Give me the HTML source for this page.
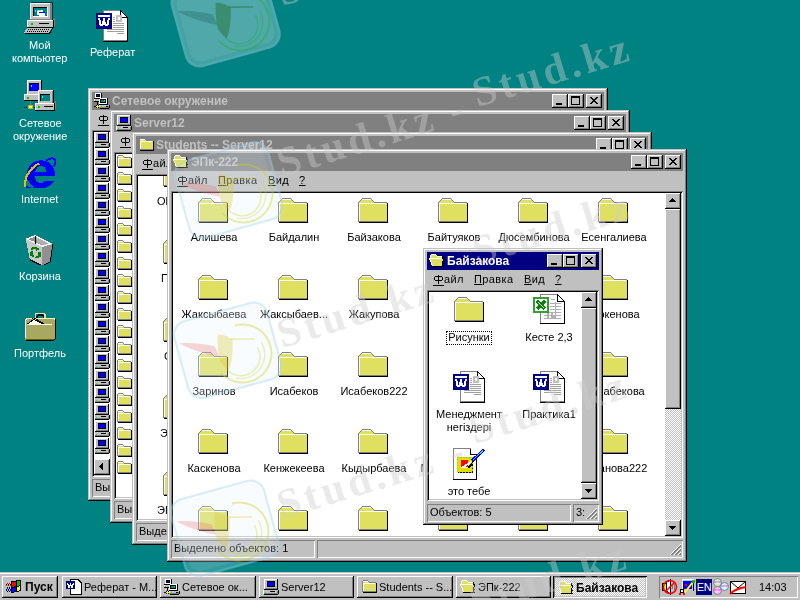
<!DOCTYPE html><html><head><meta charset="utf-8"><style>
*{margin:0;padding:0;box-sizing:border-box}
html,body{width:800px;height:600px;overflow:hidden;background:#008282;font-family:"Liberation Sans",sans-serif;font-size:11px;color:#000;position:relative}
.a{position:absolute}
.win{position:absolute;background:#c0c0c0;box-shadow:inset -1px -1px #000,inset 1px 1px #c0c0c0,inset -2px -2px #808080,inset 2px 2px #fff;overflow:hidden}
.tb{position:absolute;left:4px;right:4px;top:4px;height:18px;background:#808080;overflow:hidden}
.tb.act{background:#000080}
.tt{position:absolute;left:20px;top:2px;font-weight:bold;font-size:12px;line-height:14px;color:#c0c0c0;white-space:nowrap}
.act .tt{color:#fff}
.bt{position:absolute;top:2px;width:16px;height:14px;background:#c0c0c0;box-shadow:inset -1px -1px #000,inset 1px 1px #fff,inset -2px -2px #808080,inset 2px 2px #c0c0c0}
.mb{position:absolute;white-space:nowrap;line-height:13px;letter-spacing:0.4px}
.u{text-decoration:underline}
.cl{position:absolute;background:#fff;box-shadow:inset 1px 1px #808080,inset -1px -1px #fff,inset 2px 2px #000,inset -2px -2px #c0c0c0;overflow:hidden}
.clin{position:absolute;left:2px;top:2px;right:2px;bottom:2px;overflow:hidden}
.sb{position:absolute;height:18px;box-shadow:inset 1px 1px #808080,inset -1px -1px #fff;white-space:nowrap;overflow:hidden}
.sb span{position:absolute;left:3px;top:2px;line-height:13px}
.lbl{position:absolute;white-space:nowrap;text-align:center;line-height:13px}
.dt{color:#fff}
.btn{position:absolute;background:#c0c0c0;box-shadow:inset -1px -1px #000,inset 1px 1px #fff,inset -2px -2px #808080,inset 2px 2px #c0c0c0}
.btn.dn{box-shadow:inset 1px 1px #000,inset -1px -1px #fff,inset 2px 2px #808080,inset -2px -2px #c0c0c0;background:repeating-conic-gradient(#fff 0 25%,#c0c0c0 0 50%) 0 0/2px 2px}
.trk{position:absolute;background-color:#e0e0e0}
svg{position:absolute;overflow:visible}
.mb,.lbl,.tt,.sb span,.tx{will-change:transform}
</style></head><body>
<svg width="0" height="0" style="position:absolute">
<defs>
<symbol id="word16" viewBox="0 0 16 16">
 <path d="M4.5 0.5 H12 L15.5 4 V15.5 H4.5 Z" fill="#fff" stroke="#000"/>
 <rect x="0" y="2" width="9" height="8" fill="#000080"/>
 <path d="M1.5 4 L3 8.5 L4.5 5.5 L6 8.5 L7.5 4" fill="none" stroke="#fff"/>
</symbol>
<pattern id="dithw" width="2" height="2" patternUnits="userSpaceOnUse"><rect width="2" height="2" fill="#c0c0c0"/><rect width="1" height="1" fill="#fff"/><rect x="1" y="1" width="1" height="1" fill="#fff"/></pattern>

<symbol id="comp32" viewBox="0 0 32 32">
 <path d="M6 1 H27 V18 H6 Z" fill="#c0c0c0"/>
 <path d="M26 0 H28 V18 H26 Z" fill="#808080"/>
 <path d="M6.5 18 V1.5 H26" fill="none" stroke="#fff"/>
 <path d="M7 0.5 H28.5 V18" fill="none" stroke="#000" stroke-opacity="0.6"/>
 <path d="M26.5 1 V17.5 H6" fill="none" stroke="#808080"/>
 <rect x="9" y="5" width="15" height="10" fill="#008080"/>
 <path d="M9.5 15 V5.5 H24" fill="none" stroke="#000"/>
 <path d="M23.5 5 V14.5 H9" fill="none" stroke="#fff"/>
 <rect x="13" y="8" width="6" height="5" fill="#fff"/><rect x="15" y="10" width="6" height="4" fill="#fff" stroke="#000" stroke-width="0"/>
 <path d="M15 10.5 H21" stroke="#0000ff"/><path d="M13 8.5 H17" stroke="#c0c0c0"/>
 <rect x="11" y="8" width="1" height="2" fill="#00ffff"/>
 <path d="M3 18 H29 V25 H3 Z" fill="#c0c0c0"/>
 <path d="M29 17 L31 15 V23 L29 25 Z" fill="#808080"/>
 <path d="M3.5 25 V18.5 H29" fill="none" stroke="#fff"/>
 <path d="M3 25.5 H29.5 V18" fill="none" stroke="#000"/>
 <rect x="7" y="21" width="2" height="2" fill="#00c000"/>
 <rect x="15" y="21" width="10" height="1" fill="#000"/>
 <path d="M3 26 H28 L25 31 H0 Z" fill="#c0c0c0"/>
 <path d="M0.5 31.5 H25.5 L28.5 26.5" fill="none" stroke="#000"/>
 <path d="M4 27.5 H26 M3 29.5 H25" stroke="#000" stroke-dasharray="1 1"/>
</symbol>
<symbol id="word32" viewBox="0 0 32 32">
 <path d="M7.5 0.5 H24.5 L31.5 7.5 V30.5 H7.5 Z" fill="#fff" stroke="#808080"/>
 <path d="M31.5 7 V31.5 H7" fill="none" stroke="#000"/>
 <path d="M24.5 0.5 V7.5 H31.5" fill="#fff" stroke="#000"/>
 <path d="M24.5 0.5 L31.5 7.5" stroke="#000"/>
 <rect x="20" y="5" width="6" height="7" fill="#c0c0c0"/><path d="M22 7h2v3h-2z" fill="#fff"/>
 <path d="M17 7.5h2M17 9.5h2M17 11.5h2M17 13.5H28M17 15.5H28M17 17.5H28M11 19.5H28M11 21.5H28M21 23.5H28" stroke="#a0a0a0"/>
 <rect x="0" y="3" width="16" height="16" fill="#0000a0"/><rect x="0.5" y="3.5" width="15" height="15" fill="none" stroke="#000060"/>
 <path d="M2 5.5h12" stroke="#fff" stroke-width="2"/>
 <path d="M3 8 L4.5 15 H6.5 L8 10 L9.5 15 H11.5 L13 8" fill="none" stroke="#fff" stroke-width="2"/>
</symbol>
<symbol id="net32" viewBox="0 0 32 32">
 <path d="M3 1 H18 V15 H3 Z" fill="#c0c0c0"/>
 <path d="M3.5 15 V1.5 H18" fill="none" stroke="#fff"/>
 <path d="M17.5 1 V15" fill="none" stroke="#000"/>
 <rect x="5" y="4" width="10" height="8" fill="#0000ff"/><path d="M5.5 12 V4.5 H15" fill="none" stroke="#000"/>
 <rect x="7" y="6" width="1" height="2" fill="#00ffff"/>
 <path d="M0 15 H15 V21 H0 Z" fill="#c0c0c0"/>
 <path d="M0.5 21 V15.5 H15" fill="none" stroke="#fff"/>
 <path d="M0 21.5 H14.5 V15" fill="none" stroke="#000"/>
 <rect x="3" y="18" width="2" height="2" fill="#00c000"/>
 <path d="M6.5 22 V27" stroke="#808080" stroke-width="1"/>
 <path d="M0 28.5 H13" stroke="#000" stroke-dasharray="1 1"/>
 <rect x="4" y="26" width="5" height="4" fill="#c0c000"/><rect x="5" y="27" width="3" height="2" fill="#ffff80"/>
 <path d="M14 11 H29 V24 H14 Z" fill="#c0c0c0"/>
 <path d="M14.5 24 V11.5 H29" fill="none" stroke="#fff"/>
 <path d="M29.5 11 V24" fill="none" stroke="#000"/>
 <path d="M28 12 V24" fill="none" stroke="#808080"/>
 <rect x="16" y="15" width="10" height="7" fill="#008080"/><path d="M16.5 22 V15.5 H26" fill="none" stroke="#000"/>
 <rect x="18" y="17" width="1" height="2" fill="#00ffff"/>
 <path d="M11 24 H30 V31 H11 Z" fill="#c0c0c0"/>
 <path d="M30 23 L32 21 V29 L30 31 Z" fill="#808080"/>
 <path d="M11.5 31 V24.5 H30" fill="none" stroke="#fff"/>
 <path d="M11 31.5 H30.5 V24" fill="none" stroke="#000"/>
 <rect x="14" y="27" width="2" height="2" fill="#00c000"/>
 <rect x="20" y="27" width="9" height="1" fill="#000"/>
</symbol>
<symbol id="ie32" viewBox="0 0 32 32">
 <path d="M17 4 C9 4 2.5 10.5 2.5 18.5 C2.5 26.5 9 32.5 17 32.5 C23 32.5 28 29 30.5 24.5 H21.5 C20.5 26 19 27 17 27 C13.5 27 11 24 11 20 H31 C31.2 19.3 31.2 18.8 31.2 18.5 C31.2 10.5 25 4 17 4 Z" fill="#0000ff"/>
 <path d="M11.5 15.5 C12 12 14 10 17 10 C20 10 22 12 22.5 15.5 Z" fill="#008080"/>
 <path d="M22 5 C26 1.5 30.5 1.5 31.5 4.5 C32 6.5 31 8.5 29.5 10.5" fill="none" stroke="#0000ff" stroke-width="2"/>
 <path d="M1.5 31 C0.5 26 2 20 6 15 C9 11 12 8.5 15.5 7.5" fill="none" stroke="#e0c000" stroke-width="2.2"/>
 <path d="M2.5 30 C4 32.5 8 33 12 32" fill="none" stroke="#0000ff" stroke-width="2"/>
 <path d="M8 22 C9 25 11 27.5 14 28.5" fill="none" stroke="#000080" stroke-width="2" stroke-dasharray="1 1"/>
</symbol>
<symbol id="recycle32" viewBox="0 0 32 32">
 <path d="M1.6 5.8 L5.8 26.2 L18.4 32.5 L18.4 13.9 Z" fill="#c8c8c8"/>
 <path d="M18.4 13.9 L28.6 10.9 L26.2 28.6 L18.4 32.5 Z" fill="#909090"/>
 <path d="M1.6 5.8 L11.2 1.9 L28.6 10.9 L18.4 13.9 Z" fill="#fff"/>
 <path d="M4.5 6.2 L11.2 3.6 L25 10.8 L18.2 12.4 Z" fill="#909090"/>
 <path d="M11.2 3.6 L14 10 L18.2 12.4 L25 10.8 Z" fill="#b0b0b0"/>
 <path d="M11.5 3 V11" stroke="#000" stroke-width="1.2"/>
 <path d="M28.8 11 L26.4 28.8 L18.4 33" fill="none" stroke="#000" stroke-width="1"/>
 <path d="M5.8 26.6 L18.4 33" fill="none" stroke="#000" stroke-width="1"/>
 <path d="M7 16 L11 14.5 L14.5 16.5 M15.5 18.5 V23 L12.5 24.5 M10 23.5 L7.5 22 V18.5" fill="none" stroke="#008000" stroke-width="2.2"/>
 <path d="M13.5 14.5 L15.5 17 L12.5 17.5 Z M14 25.5 L11 24.5 L13 22.5 Z M6 20 L8 17 L9.5 19.5 Z" fill="#008000"/>
</symbol>
<symbol id="brief32" viewBox="0 0 32 32">
 <path d="M11.5 8 V5 Q11.5 3.5 13 3.5 H19.5 Q21 3.5 21 5 V8" fill="none" stroke="#e0e0a0" stroke-width="1.6"/>
 <path d="M13 8 V6 Q13 5 14 5 H18.5 Q19.5 5 19.5 6 V8" fill="none" stroke="#000" stroke-width="1.2"/>
 <path d="M0.5 9.5 L2.5 7.5 H30 L31.5 9 V28 L30 29.5 H1 L0.5 29 Z" fill="#a8a860"/>
 <path d="M1 10.5 L2.5 8.5 H30 L31 10" fill="none" stroke="#f0f0c0" stroke-width="1.5"/>
 <path d="M3 14.5 L11 8.5 L20 14.5 Z" fill="#fff"/>
 <path d="M3 14.5 L11 8.5 M8 8.5 L20 14.5 M11 8.5 L21 14.5" fill="none" stroke="#000" stroke-width="1"/>
 <path d="M3 14.5 H28" stroke="#fff" stroke-width="1"/>
 <path d="M1.5 28 V10" stroke="#fff"/>
 <path d="M31.5 9 V28.5 L30 30 H1.5" fill="none" stroke="#000" stroke-width="1.2"/>
 <path d="M2 29 H30" stroke="#606000"/>
</symbol>
<symbol id="excel32" viewBox="0 0 32 32">
 <path d="M7.5 0.5 H24.5 L31.5 7.5 V29.5 H7.5 Z" fill="#fff" stroke="#808080"/>
 <path d="M31.5 7 V29.5 H7" fill="none" stroke="#000"/>
 <path d="M24.5 0.5 V7.5 H31.5" fill="#fff" stroke="#000"/>
 <path d="M24.5 0.5 L31.5 7.5" stroke="#000"/>
 <path d="M18 5.5h4M17 9.5H28M17 12.5H28M17 15.5H28M11 18.5H28M11 21.5H28M11 24.5H28M22.5 8V25" stroke="#b0b0b0"/>
 <path d="M15 16V25M19 19V25M21 21V25" stroke="#b0b0b0" stroke-width="2"/>
 <rect x="1" y="4" width="14" height="14" fill="#fff" stroke="#30a030" stroke-width="2"/>
 <path d="M4 7 L12 15 M12 7 L4 15" stroke="#108010" stroke-width="3"/>
 <path d="M5 8 L11 14" stroke="#e0ffe0" stroke-width="0.8"/>
</symbol>
<symbol id="paint32" viewBox="0 0 32 32">
 <path d="M0.5 0.5 H17.5 L23.5 6.5 V31.5 H0.5 Z" fill="#fff" stroke="#808080"/>
 <path d="M23.5 6 V31.5 H0" fill="none" stroke="#000"/>
 <path d="M17.5 0.5 V6.5 H23.5" fill="#fff" stroke="#000"/>
 <rect x="5" y="10" width="15" height="15" fill="#000"/>
 <path d="M4 9 H19 V24 H4 Z" fill="#e0e000"/>
 <path d="M4 9 H19 V24 H4 Z" fill="none" stroke="#c0c000" stroke-dasharray="1.5 1.5"/>
 <rect x="8" y="12" width="7" height="8" fill="#ff0000"/>
 <rect x="8" y="19" width="7" height="1" fill="#fff"/>
 <path d="M19 13 L31 1.5" stroke="#0000ff" stroke-width="3"/>
 <path d="M20 12 L30 2.5" stroke="#60c0ff" stroke-width="1"/>
 <path d="M9.5 19.5 L18 14" stroke="#fff" stroke-width="2"/>
 <path d="M15 20 L19 16" stroke="#000" stroke-width="2"/>
</symbol>
<symbol id="winlogo" viewBox="0 0 16 16">
 <path d="M5 2.5 L10 1.5 L15 0.5 V12 L10 13 L5 14 Z" fill="#000"/>
 <path d="M6 3.3 L9.6 2.6 V7.2 L6 7.9 Z" fill="#ff0000"/>
 <path d="M10.6 2.4 L14 1.7 V6.3 L10.6 7 Z" fill="#00c000"/>
 <path d="M6 8.9 L9.6 8.2 V12.3 L6 13 Z" fill="#0000ff"/>
 <path d="M10.6 8 L14 7.3 V11.4 L10.6 12.1 Z" fill="#ffff00"/>
 <path d="M1 4.5h1M3 4.5h1M0 6.5h1M2 6.5h1M4 6.5h1" stroke="#ff0000"/>
 <path d="M1 9.5h1M3 9.5h1M0 11.5h1M2 11.5h1M4 11.5h1" stroke="#0000ff"/>
 <path d="M0 5.5h1M2 5.5h1M4 5.5h1M1 8.5h1M3 8.5h1M0 10.5h1M2 10.5h1M4 10.5h1M1 12.5h1M3 12.5h1" stroke="#000"/>
</symbol>
<symbol id="folder32" viewBox="0 0 32 32"><path fill="#808080" d="M5 0h9v1h-9zM4 1h1v1h-1zM14 1h1v1h-1zM3 2h1v1h-1zM15 2h1v1h-1zM2 3h1v1h-1zM16 3h1v1h-1zM1 4h1v1h-1zM17 4h13v1h-13zM1 5h1v1h-1zM1 6h1v1h-1zM1 7h1v1h-1zM1 8h1v1h-1zM1 9h1v1h-1zM1 10h1v1h-1zM1 11h1v1h-1zM1 12h1v1h-1zM1 13h1v1h-1zM1 14h1v1h-1zM1 15h1v1h-1zM1 16h1v1h-1zM1 17h1v1h-1zM1 18h1v1h-1zM1 19h1v1h-1zM1 20h1v1h-1zM1 21h1v1h-1zM1 22h1v1h-1zM1 23h29v1h-29z"/><path fill="#ffffff" d="M5 1h9v1h-9zM2 5h27v1h-27zM2 6h1v1h-1zM2 7h1v1h-1zM2 8h1v1h-1zM2 9h1v1h-1zM2 10h1v1h-1zM2 11h1v1h-1zM2 12h1v1h-1zM2 13h1v1h-1zM2 14h1v1h-1zM2 15h1v1h-1zM2 16h1v1h-1zM2 17h1v1h-1zM2 18h1v1h-1zM2 19h1v1h-1zM2 20h1v1h-1zM2 21h1v1h-1zM2 22h1v1h-1z"/><path fill="#e0e060" d="M4 2h11v1h-11zM3 3h13v1h-13zM2 4h15v1h-15zM29 5h1v1h-1zM3 6h27v1h-27zM3 7h27v1h-27zM3 8h27v1h-27zM3 9h27v1h-27zM3 10h27v1h-27zM3 11h27v1h-27zM3 12h27v1h-27zM3 13h27v1h-27zM3 14h27v1h-27zM3 15h27v1h-27zM3 16h27v1h-27zM3 17h27v1h-27zM3 18h27v1h-27zM3 19h27v1h-27zM3 20h27v1h-27zM3 21h27v1h-27zM3 22h27v1h-27z"/><path fill="#000000" d="M30 5h1v1h-1zM30 6h1v1h-1zM30 7h1v1h-1zM30 8h1v1h-1zM30 9h1v1h-1zM30 10h1v1h-1zM30 11h1v1h-1zM30 12h1v1h-1zM30 13h1v1h-1zM30 14h1v1h-1zM30 15h1v1h-1zM30 16h1v1h-1zM30 17h1v1h-1zM30 18h1v1h-1zM30 19h1v1h-1zM30 20h1v1h-1zM30 21h1v1h-1zM30 22h1v1h-1zM30 23h1v1h-1zM2 24h29v1h-29z"/></symbol><symbol id="folder16" viewBox="0 0 16 16"><path fill="#808080" d="M2 1h5v1h-5zM1 2h1v1h-1zM7 2h1v1h-1zM1 3h1v1h-1zM8 3h7v1h-7zM1 4h1v1h-1zM1 5h1v1h-1zM1 6h1v1h-1zM1 7h1v1h-1zM1 8h1v1h-1zM1 9h1v1h-1zM1 10h1v1h-1zM1 11h1v1h-1zM1 12h14v1h-14z"/><path fill="#ffffff" d="M2 2h5v1h-5zM2 4h12v1h-12zM2 5h1v1h-1zM2 6h1v1h-1zM2 7h1v1h-1zM2 8h1v1h-1zM2 9h1v1h-1zM2 10h1v1h-1zM2 11h1v1h-1z"/><path fill="#e0e060" d="M2 3h6v1h-6zM14 4h1v1h-1zM3 5h12v1h-12zM3 6h12v1h-12zM3 7h12v1h-12zM3 8h12v1h-12zM3 9h12v1h-12zM3 10h12v1h-12zM3 11h12v1h-12z"/><path fill="#000000" d="M15 4h1v1h-1zM15 5h1v1h-1zM15 6h1v1h-1zM15 7h1v1h-1zM15 8h1v1h-1zM15 9h1v1h-1zM15 10h1v1h-1zM15 11h1v1h-1zM15 12h1v1h-1zM2 13h14v1h-14z"/></symbol><symbol id="ofolder16" viewBox="0 0 16 16"><path fill="#ffffff" d="M2 1h5v1h-5zM1 2h1v1h-1zM7 2h1v1h-1zM1 3h1v1h-1zM8 3h5v1h-5zM1 4h1v1h-1zM0 5h13v1h-13zM0 6h1v1h-1zM1 7h1v1h-1zM1 8h1v1h-1zM2 9h1v1h-1zM2 10h1v1h-1zM2 11h1v1h-1zM3 12h1v1h-1z"/><path fill="#e0e060" d="M2 2h5v1h-5zM2 3h6v1h-6zM2 4h11v1h-11zM1 6h13v1h-13zM2 7h12v1h-12zM2 8h11v1h-11zM3 9h10v1h-10zM3 10h10v1h-10zM3 11h10v1h-10zM4 12h9v1h-9z"/><path fill="#000000" d="M13 3h1v1h-1zM13 4h1v1h-1zM13 5h2v1h-2zM14 6h1v1h-1zM14 7h1v1h-1zM13 8h1v1h-1zM13 9h1v1h-1zM13 10h2v1h-2zM13 11h1v1h-1zM13 12h1v1h-1zM3 13h12v1h-12z"/></symbol><symbol id="comp16" viewBox="0 0 16 16"><path fill="#ffffff" d="M1 0h13v1h-13zM1 1h1v1h-1zM1 2h1v1h-1zM1 3h1v1h-1zM1 4h1v1h-1zM1 5h1v1h-1zM1 6h1v1h-1zM1 7h1v1h-1zM1 8h1v1h-1zM1 9h1v1h-1zM0 11h1v1h-1zM0 12h1v1h-1zM0 13h1v1h-1zM0 14h1v1h-1z"/><path fill="#000000" d="M14 0h1v1h-1zM14 1h1v1h-1zM4 2h8v1h-8zM14 2h1v1h-1zM4 3h1v1h-1zM11 3h1v1h-1zM14 3h1v1h-1zM4 4h1v1h-1zM11 4h1v1h-1zM14 4h1v1h-1zM4 5h1v1h-1zM11 5h1v1h-1zM14 5h1v1h-1zM4 6h1v1h-1zM11 6h1v1h-1zM14 6h1v1h-1zM4 7h8v1h-8zM14 7h1v1h-1zM14 8h1v1h-1zM14 9h1v1h-1zM1 10h14v1h-14zM15 11h1v1h-1zM7 12h5v1h-5zM15 12h1v1h-1zM15 13h1v1h-1zM15 14h1v1h-1zM1 15h14v1h-14z"/><path fill="#c0c0c0" d="M2 1h12v1h-12zM2 2h2v1h-2zM12 2h2v1h-2zM2 3h2v1h-2zM12 3h2v1h-2zM2 4h2v1h-2zM12 4h2v1h-2zM2 5h2v1h-2zM12 5h2v1h-2zM2 6h2v1h-2zM12 6h2v1h-2zM2 7h2v1h-2zM12 7h2v1h-2zM2 8h12v1h-12zM1 11h14v1h-14zM1 12h6v1h-6zM12 12h2v1h-2zM1 13h1v1h-1zM3 13h11v1h-11z"/><path fill="#0000ff" d="M5 3h6v1h-6zM5 4h6v1h-6zM5 5h6v1h-6zM5 6h6v1h-6z"/><path fill="#808080" d="M2 9h12v1h-12zM14 12h1v1h-1zM14 13h1v1h-1zM1 14h14v1h-14z"/><path fill="#00ff00" d="M2 13h1v1h-1z"/></symbol><symbol id="net16" viewBox="0 0 16 16"><path fill="#ffffff" d="M1 0h6v1h-6zM1 1h1v1h-1zM6 1h1v1h-1zM1 2h1v1h-1zM6 2h1v1h-1zM1 3h1v1h-1zM6 3h1v1h-1zM1 4h6v1h-6zM6 5h7v1h-7zM0 6h1v1h-1zM5 6h1v1h-1zM12 6h1v1h-1zM0 7h1v1h-1zM5 7h1v1h-1zM12 7h1v1h-1zM5 8h1v1h-1zM12 8h1v1h-1zM5 9h1v1h-1zM12 9h1v1h-1zM5 10h8v1h-8zM5 12h1v1h-1zM5 13h1v1h-1z"/><path fill="#000000" d="M7 0h1v1h-1zM2 1h4v1h-4zM7 1h1v1h-1zM2 2h1v1h-1zM5 2h1v1h-1zM7 2h1v1h-1zM2 3h4v1h-4zM7 3h1v1h-1zM7 4h1v1h-1zM0 5h6v1h-6zM13 5h1v1h-1zM6 6h6v1h-6zM13 6h1v1h-1zM6 7h1v1h-1zM11 7h1v1h-1zM13 7h1v1h-1zM0 8h5v1h-5zM6 8h1v1h-1zM11 8h1v1h-1zM13 8h1v1h-1zM3 9h1v1h-1zM6 9h6v1h-6zM13 9h1v1h-1zM3 10h1v1h-1zM13 10h1v1h-1zM3 11h1v1h-1zM5 11h9v1h-9zM2 12h1v1h-1zM4 12h1v1h-1zM15 12h1v1h-1zM0 13h2v1h-2zM12 13h2v1h-2zM15 13h1v1h-1zM2 14h1v1h-1zM4 14h1v1h-1zM15 14h1v1h-1zM6 15h9v1h-9z"/><path fill="#0000ff" d="M3 2h2v1h-2z"/><path fill="#c0c0c0" d="M1 6h4v1h-4zM2 7h3v1h-3zM6 12h9v1h-9zM6 13h1v1h-1zM8 13h4v1h-4z"/><path fill="#00ff00" d="M1 7h1v1h-1zM7 13h1v1h-1z"/><path fill="#008080" d="M7 7h3v1h-3zM7 8h4v1h-4z"/><path fill="#00ffff" d="M10 7h1v1h-1z"/><path fill="#ffff00" d="M3 12h1v1h-1zM2 13h3v1h-3zM3 14h1v1h-1z"/><path fill="#808080" d="M14 13h1v1h-1zM5 14h10v1h-10z"/></symbol></defs></svg>
<svg style="left:24px;top:2px" width="32" height="32" shape-rendering="crispEdges"><use href="#comp32" width="32" height="32"/></svg><div class="lbl dt" style="left:29px;top:39px">Мой</div><div class="lbl dt" style="left:12px;top:52px">компьютер</div><svg style="left:96px;top:10px" width="32" height="32" shape-rendering="crispEdges"><use href="#word32" width="32" height="32"/></svg><div class="lbl dt" style="left:90px;top:46px">Реферат</div><svg style="left:24px;top:79px" width="32" height="32" shape-rendering="crispEdges"><use href="#net32" width="32" height="32"/></svg><div class="lbl dt" style="left:19px;top:117px">Сетевое</div><div class="lbl dt" style="left:13px;top:130px">окружение</div><svg style="left:24px;top:156px" width="32" height="32" shape-rendering="crispEdges"><use href="#ie32" width="32" height="32"/></svg><div class="lbl dt" style="left:21px;top:193px">Internet</div><svg style="left:24px;top:233px" width="32" height="32" shape-rendering="crispEdges"><use href="#recycle32" width="32" height="32"/></svg><div class="lbl dt" style="left:19px;top:270px">Корзина</div><svg style="left:24px;top:310px" width="32" height="32" shape-rendering="crispEdges"><use href="#brief32" width="32" height="32"/></svg><div class="lbl dt" style="left:14px;top:347px">Портфель</div><div class="win" style="left:88px;top:88px;width:520px;height:413px"><div class="mb" style="left:10px;top:25px"><span style="display:inline-block;position:relative;width:11px;height:13px;vertical-align:top"><svg style="left:1px;top:0" width="11" height="13" shape-rendering="crispEdges"><path fill="#000" d="M4 2h1v9h-1zM1 3h7v1h-7zM1 7h7v1h-7zM0 4h1v3h-1zM8 4h1v3h-1zM-1 12h11v1h-11z"/></svg></span></div><div class="cl" style="left:4px;top:42px;width:512px;height:347px"><div class="clin"><svg style="left:0px;top:0px" width="16" height="16" shape-rendering="crispEdges"><use href="#comp16" width="16" height="16"/></svg><svg style="left:0px;top:17px" width="16" height="16" shape-rendering="crispEdges"><use href="#comp16" width="16" height="16"/></svg><svg style="left:0px;top:34px" width="16" height="16" shape-rendering="crispEdges"><use href="#comp16" width="16" height="16"/></svg><svg style="left:0px;top:51px" width="16" height="16" shape-rendering="crispEdges"><use href="#comp16" width="16" height="16"/></svg><svg style="left:0px;top:68px" width="16" height="16" shape-rendering="crispEdges"><use href="#comp16" width="16" height="16"/></svg><svg style="left:0px;top:85px" width="16" height="16" shape-rendering="crispEdges"><use href="#comp16" width="16" height="16"/></svg><svg style="left:0px;top:102px" width="16" height="16" shape-rendering="crispEdges"><use href="#comp16" width="16" height="16"/></svg><svg style="left:0px;top:119px" width="16" height="16" shape-rendering="crispEdges"><use href="#comp16" width="16" height="16"/></svg><svg style="left:0px;top:136px" width="16" height="16" shape-rendering="crispEdges"><use href="#comp16" width="16" height="16"/></svg><svg style="left:0px;top:153px" width="16" height="16" shape-rendering="crispEdges"><use href="#comp16" width="16" height="16"/></svg><svg style="left:0px;top:170px" width="16" height="16" shape-rendering="crispEdges"><use href="#comp16" width="16" height="16"/></svg><svg style="left:0px;top:187px" width="16" height="16" shape-rendering="crispEdges"><use href="#comp16" width="16" height="16"/></svg><svg style="left:0px;top:204px" width="16" height="16" shape-rendering="crispEdges"><use href="#comp16" width="16" height="16"/></svg><svg style="left:0px;top:221px" width="16" height="16" shape-rendering="crispEdges"><use href="#comp16" width="16" height="16"/></svg><svg style="left:0px;top:238px" width="16" height="16" shape-rendering="crispEdges"><use href="#comp16" width="16" height="16"/></svg><svg style="left:0px;top:255px" width="16" height="16" shape-rendering="crispEdges"><use href="#comp16" width="16" height="16"/></svg><svg style="left:0px;top:272px" width="16" height="16" shape-rendering="crispEdges"><use href="#comp16" width="16" height="16"/></svg><svg style="left:0px;top:289px" width="16" height="16" shape-rendering="crispEdges"><use href="#comp16" width="16" height="16"/></svg><svg style="left:0px;top:306px" width="16" height="16" shape-rendering="crispEdges"><use href="#comp16" width="16" height="16"/></svg><div class="btn" style="left:0px;top:327px;width:16px;height:16px"><svg style="left:5px;top:4px" width="4" height="7" shape-rendering="crispEdges"><path d="M3 0h1v7h-1zM2 1h1v5h-1zM1 2h1v3h-1zM0 3h1v1h-1z" fill="#000"/></svg></div></div></div><div class="sb" style="left:4px;top:391px;width:144px;height:18px"><span>Выделено объектов: 1</span></div><div class="sb" style="left:150px;top:391px;width:366px;height:18px"><span></span></div><svg style="left:503px;top:395px" width="12" height="12" shape-rendering="crispEdges"><path d="M11 0 L0 11 M11 4 L4 11 M11 8 L8 11" stroke="#fff"/><path d="M11 1 L1 11 M11 2 L2 11 M11 5 L5 11 M11 6 L6 11 M11 9 L9 11 M11 10 L10 11" stroke="#808080"/></svg><div class="tb"><svg style="left:2px;top:1px" width="16" height="16" shape-rendering="crispEdges"><use href="#net16" width="16" height="16"/></svg><div class="tt">Сетевое окружение</div><div class="bt" style="left:460px"><div class="a" style="left:4px;top:9px;width:6px;height:2px;background:#000"></div></div><div class="bt" style="left:476px"><div class="a" style="left:3px;top:2px;width:9px;height:9px;border:1px solid #000;border-top-width:2px"></div></div><div class="bt" style="left:494px"><svg style="left:4px;top:3px" width="8" height="7" shape-rendering="crispEdges"><path d="M0 0h2v1h-2zM6 0h2v1h-2zM1 1h2v1h-2zM5 1h2v1h-2zM2 2h4v1h-4zM3 3h2v1h-2zM2 4h4v1h-4zM1 5h2v1h-2zM5 5h2v1h-2zM0 6h2v1h-2zM6 6h2v1h-2z" fill="#000"/></svg></div></div></div><div class="win" style="left:110px;top:110px;width:520px;height:413px"><div class="mb" style="left:10px;top:25px"><span style="display:inline-block;position:relative;width:11px;height:13px;vertical-align:top"><svg style="left:1px;top:0" width="11" height="13" shape-rendering="crispEdges"><path fill="#000" d="M4 2h1v9h-1zM1 3h7v1h-7zM1 7h7v1h-7zM0 4h1v3h-1zM8 4h1v3h-1zM-1 12h11v1h-11z"/></svg></span></div><div class="cl" style="left:4px;top:42px;width:512px;height:347px"><div class="clin"><svg style="left:0px;top:0px" width="16" height="16" shape-rendering="crispEdges"><use href="#folder16" width="16" height="16"/></svg><svg style="left:0px;top:17px" width="16" height="16" shape-rendering="crispEdges"><use href="#folder16" width="16" height="16"/></svg><svg style="left:0px;top:34px" width="16" height="16" shape-rendering="crispEdges"><use href="#folder16" width="16" height="16"/></svg><svg style="left:0px;top:51px" width="16" height="16" shape-rendering="crispEdges"><use href="#folder16" width="16" height="16"/></svg><svg style="left:0px;top:68px" width="16" height="16" shape-rendering="crispEdges"><use href="#folder16" width="16" height="16"/></svg><svg style="left:0px;top:85px" width="16" height="16" shape-rendering="crispEdges"><use href="#folder16" width="16" height="16"/></svg><svg style="left:0px;top:102px" width="16" height="16" shape-rendering="crispEdges"><use href="#folder16" width="16" height="16"/></svg><svg style="left:0px;top:119px" width="16" height="16" shape-rendering="crispEdges"><use href="#folder16" width="16" height="16"/></svg><svg style="left:0px;top:136px" width="16" height="16" shape-rendering="crispEdges"><use href="#folder16" width="16" height="16"/></svg><svg style="left:0px;top:153px" width="16" height="16" shape-rendering="crispEdges"><use href="#folder16" width="16" height="16"/></svg><svg style="left:0px;top:170px" width="16" height="16" shape-rendering="crispEdges"><use href="#folder16" width="16" height="16"/></svg><svg style="left:0px;top:187px" width="16" height="16" shape-rendering="crispEdges"><use href="#folder16" width="16" height="16"/></svg><svg style="left:0px;top:204px" width="16" height="16" shape-rendering="crispEdges"><use href="#folder16" width="16" height="16"/></svg><svg style="left:0px;top:221px" width="16" height="16" shape-rendering="crispEdges"><use href="#folder16" width="16" height="16"/></svg><svg style="left:0px;top:238px" width="16" height="16" shape-rendering="crispEdges"><use href="#folder16" width="16" height="16"/></svg><svg style="left:0px;top:255px" width="16" height="16" shape-rendering="crispEdges"><use href="#folder16" width="16" height="16"/></svg><svg style="left:0px;top:272px" width="16" height="16" shape-rendering="crispEdges"><use href="#folder16" width="16" height="16"/></svg><svg style="left:0px;top:289px" width="16" height="16" shape-rendering="crispEdges"><use href="#folder16" width="16" height="16"/></svg><svg style="left:0px;top:306px" width="16" height="16" shape-rendering="crispEdges"><use href="#folder16" width="16" height="16"/></svg></div></div><div class="sb" style="left:4px;top:391px;width:144px;height:18px"><span>Выделено объектов: 1</span></div><div class="sb" style="left:150px;top:391px;width:366px;height:18px"><span></span></div><svg style="left:503px;top:395px" width="12" height="12" shape-rendering="crispEdges"><path d="M11 0 L0 11 M11 4 L4 11 M11 8 L8 11" stroke="#fff"/><path d="M11 1 L1 11 M11 2 L2 11 M11 5 L5 11 M11 6 L6 11 M11 9 L9 11 M11 10 L10 11" stroke="#808080"/></svg><div class="tb"><svg style="left:2px;top:1px" width="16" height="16" shape-rendering="crispEdges"><use href="#comp16" width="16" height="16"/></svg><div class="tt">Server12</div><div class="bt" style="left:460px"><div class="a" style="left:4px;top:9px;width:6px;height:2px;background:#000"></div></div><div class="bt" style="left:476px"><div class="a" style="left:3px;top:2px;width:9px;height:9px;border:1px solid #000;border-top-width:2px"></div></div><div class="bt" style="left:494px"><svg style="left:4px;top:3px" width="8" height="7" shape-rendering="crispEdges"><path d="M0 0h2v1h-2zM6 0h2v1h-2zM1 1h2v1h-2zM5 1h2v1h-2zM2 2h4v1h-4zM3 3h2v1h-2zM2 4h4v1h-4zM1 5h2v1h-2zM5 5h2v1h-2zM0 6h2v1h-2zM6 6h2v1h-2z" fill="#000"/></svg></div></div></div><div class="win" style="left:132px;top:132px;width:520px;height:413px"><div class="mb" style="left:10px;top:25px"><span style="display:inline-block;position:relative;width:11px;height:13px;vertical-align:top"><svg style="left:1px;top:0" width="11" height="13" shape-rendering="crispEdges"><path fill="#000" d="M4 2h1v9h-1zM1 3h7v1h-7zM1 7h7v1h-7zM0 4h1v3h-1zM8 4h1v3h-1zM-1 12h11v1h-11z"/></svg></span>айл</div><div class="cl" style="left:4px;top:42px;width:512px;height:347px"><div class="clin"><svg style="left:24px;top:-14px" width="32" height="32" shape-rendering="crispEdges"><use href="#folder32" width="32" height="32"/></svg><svg style="left:24px;top:63px" width="32" height="32" shape-rendering="crispEdges"><use href="#folder32" width="32" height="32"/></svg><svg style="left:24px;top:141px" width="32" height="32" shape-rendering="crispEdges"><use href="#folder32" width="32" height="32"/></svg><svg style="left:24px;top:218px" width="32" height="32" shape-rendering="crispEdges"><use href="#folder32" width="32" height="32"/></svg><svg style="left:24px;top:295px" width="32" height="32" shape-rendering="crispEdges"><use href="#folder32" width="32" height="32"/></svg><svg style="left:24px;top:372px" width="32" height="32" shape-rendering="crispEdges"><use href="#folder32" width="32" height="32"/></svg><div class="lbl" style="left:19px;top:19px">Ol</div><div class="lbl" style="left:23px;top:96px">П</div><div class="lbl" style="left:26px;top:174px">С</div><div class="lbl" style="left:22px;top:251px">Э</div><div class="lbl" style="left:19px;top:328px">ЭП</div></div></div><div class="sb" style="left:4px;top:391px;width:144px;height:18px"><span>Выделено объектов: 1</span></div><div class="sb" style="left:150px;top:391px;width:366px;height:18px"><span></span></div><svg style="left:503px;top:395px" width="12" height="12" shape-rendering="crispEdges"><path d="M11 0 L0 11 M11 4 L4 11 M11 8 L8 11" stroke="#fff"/><path d="M11 1 L1 11 M11 2 L2 11 M11 5 L5 11 M11 6 L6 11 M11 9 L9 11 M11 10 L10 11" stroke="#808080"/></svg><div class="tb"><svg style="left:2px;top:1px" width="16" height="16" shape-rendering="crispEdges"><use href="#folder16" width="16" height="16"/></svg><div class="tt">Students -- Server12</div><div class="bt" style="left:460px"><div class="a" style="left:4px;top:9px;width:6px;height:2px;background:#000"></div></div><div class="bt" style="left:476px"><div class="a" style="left:3px;top:2px;width:9px;height:9px;border:1px solid #000;border-top-width:2px"></div></div><div class="bt" style="left:494px"><svg style="left:4px;top:3px" width="8" height="7" shape-rendering="crispEdges"><path d="M0 0h2v1h-2zM6 0h2v1h-2zM1 1h2v1h-2zM5 1h2v1h-2zM2 2h4v1h-4zM3 3h2v1h-2zM2 4h4v1h-4zM1 5h2v1h-2zM5 5h2v1h-2zM0 6h2v1h-2zM6 6h2v1h-2z" fill="#000"/></svg></div></div></div><div class="win" style="left:167px;top:149px;width:520px;height:413px"><div class="mb" style="left:10px;top:25px"><span style="display:inline-block;position:relative;width:11px;height:13px;vertical-align:top"><svg style="left:1px;top:0" width="11" height="13" shape-rendering="crispEdges"><path fill="#000" d="M4 2h1v9h-1zM1 3h7v1h-7zM1 7h7v1h-7zM0 4h1v3h-1zM8 4h1v3h-1zM-1 12h11v1h-11z"/></svg></span>айл</div><div class="mb" style="left:51px;top:25px"><span class="u">П</span>равка</div><div class="mb" style="left:101px;top:25px"><span class="u">В</span>ид</div><div class="mb" style="left:132px;top:25px"><span class="u">?</span></div><div class="cl" style="left:4px;top:42px;width:512px;height:347px"><div class="clin"><svg style="left:24px;top:5px" width="32" height="32" shape-rendering="crispEdges"><use href="#folder32" width="32" height="32"/></svg><div class="lbl" style="left:0.5px;width:80px;top:38px">Алишева</div><svg style="left:104px;top:5px" width="32" height="32" shape-rendering="crispEdges"><use href="#folder32" width="32" height="32"/></svg><div class="lbl" style="left:80.5px;width:80px;top:38px">Байдалин</div><svg style="left:184px;top:5px" width="32" height="32" shape-rendering="crispEdges"><use href="#folder32" width="32" height="32"/></svg><div class="lbl" style="left:160.5px;width:80px;top:38px">Байзакова</div><svg style="left:264px;top:5px" width="32" height="32" shape-rendering="crispEdges"><use href="#folder32" width="32" height="32"/></svg><div class="lbl" style="left:240.5px;width:80px;top:38px">Байтуяков</div><svg style="left:344px;top:5px" width="32" height="32" shape-rendering="crispEdges"><use href="#folder32" width="32" height="32"/></svg><div class="lbl" style="left:320.5px;width:80px;top:38px">Дюсембинова</div><svg style="left:424px;top:5px" width="32" height="32" shape-rendering="crispEdges"><use href="#folder32" width="32" height="32"/></svg><div class="lbl" style="left:400.5px;width:80px;top:38px">Есенгалиева</div><svg style="left:24px;top:82px" width="32" height="32" shape-rendering="crispEdges"><use href="#folder32" width="32" height="32"/></svg><div class="lbl" style="left:0.5px;width:80px;top:115px">Жаксыбаева</div><svg style="left:104px;top:82px" width="32" height="32" shape-rendering="crispEdges"><use href="#folder32" width="32" height="32"/></svg><div class="lbl" style="left:80.5px;width:80px;top:115px">Жаксыбаев...</div><svg style="left:184px;top:82px" width="32" height="32" shape-rendering="crispEdges"><use href="#folder32" width="32" height="32"/></svg><div class="lbl" style="left:160.5px;width:80px;top:115px">Жакупова</div><svg style="left:264px;top:82px" width="32" height="32" shape-rendering="crispEdges"><use href="#folder32" width="32" height="32"/></svg><svg style="left:344px;top:82px" width="32" height="32" shape-rendering="crispEdges"><use href="#folder32" width="32" height="32"/></svg><svg style="left:424px;top:82px" width="32" height="32" shape-rendering="crispEdges"><use href="#folder32" width="32" height="32"/></svg><div class="lbl" style="left:400.5px;width:80px;top:115px">Жокенова</div><svg style="left:24px;top:159px" width="32" height="32" shape-rendering="crispEdges"><use href="#folder32" width="32" height="32"/></svg><div class="lbl" style="left:0.5px;width:80px;top:192px">Заринов</div><svg style="left:104px;top:159px" width="32" height="32" shape-rendering="crispEdges"><use href="#folder32" width="32" height="32"/></svg><div class="lbl" style="left:80.5px;width:80px;top:192px">Исабеков</div><svg style="left:184px;top:159px" width="32" height="32" shape-rendering="crispEdges"><use href="#folder32" width="32" height="32"/></svg><div class="lbl" style="left:160.5px;width:80px;top:192px">Исабеков222</div><svg style="left:264px;top:159px" width="32" height="32" shape-rendering="crispEdges"><use href="#folder32" width="32" height="32"/></svg><svg style="left:344px;top:159px" width="32" height="32" shape-rendering="crispEdges"><use href="#folder32" width="32" height="32"/></svg><svg style="left:424px;top:159px" width="32" height="32" shape-rendering="crispEdges"><use href="#folder32" width="32" height="32"/></svg><div class="lbl" style="left:400.5px;width:80px;top:192px">Мусабекова</div><svg style="left:24px;top:236px" width="32" height="32" shape-rendering="crispEdges"><use href="#folder32" width="32" height="32"/></svg><div class="lbl" style="left:0.5px;width:80px;top:269px">Каскенова</div><svg style="left:104px;top:236px" width="32" height="32" shape-rendering="crispEdges"><use href="#folder32" width="32" height="32"/></svg><div class="lbl" style="left:80.5px;width:80px;top:269px">Кенжекеева</div><svg style="left:184px;top:236px" width="32" height="32" shape-rendering="crispEdges"><use href="#folder32" width="32" height="32"/></svg><div class="lbl" style="left:160.5px;width:80px;top:269px">Кыдырбаева</div><svg style="left:264px;top:236px" width="32" height="32" shape-rendering="crispEdges"><use href="#folder32" width="32" height="32"/></svg><div class="lbl" style="left:240.5px;width:80px;top:269px">Муратбекова</div><svg style="left:344px;top:236px" width="32" height="32" shape-rendering="crispEdges"><use href="#folder32" width="32" height="32"/></svg><svg style="left:424px;top:236px" width="32" height="32" shape-rendering="crispEdges"><use href="#folder32" width="32" height="32"/></svg><div class="lbl" style="left:400.5px;width:80px;top:269px">Касанова222</div><svg style="left:24px;top:313px" width="32" height="32" shape-rendering="crispEdges"><use href="#folder32" width="32" height="32"/></svg><svg style="left:104px;top:313px" width="32" height="32" shape-rendering="crispEdges"><use href="#folder32" width="32" height="32"/></svg><svg style="left:184px;top:313px" width="32" height="32" shape-rendering="crispEdges"><use href="#folder32" width="32" height="32"/></svg><svg style="left:264px;top:313px" width="32" height="32" shape-rendering="crispEdges"><use href="#folder32" width="32" height="32"/></svg><svg style="left:344px;top:313px" width="32" height="32" shape-rendering="crispEdges"><use href="#folder32" width="32" height="32"/></svg><svg style="left:424px;top:313px" width="32" height="32" shape-rendering="crispEdges"><use href="#folder32" width="32" height="32"/></svg><svg style="left:492px;top:0px" width="16" height="343"><rect width="16" height="343" fill="url(#dithw)"/></svg><div class="btn" style="left:492px;top:0px;width:16px;height:16px"><svg style="left:4px;top:5px" width="7" height="4" shape-rendering="crispEdges"><path d="M3 0h1v1h-1zM2 1h3v1h-3zM1 2h5v1h-5zM0 3h7v1h-7z" fill="#000"/></svg></div><div class="btn" style="left:492px;top:327px;width:16px;height:16px"><svg style="left:4px;top:6px" width="7" height="4" shape-rendering="crispEdges"><path d="M0 0h7v1h-7zM1 1h5v1h-5zM2 2h3v1h-3zM3 3h1v1h-1z" fill="#000"/></svg></div><div class="btn" style="left:492px;top:16px;width:16px;height:200px"></div></div></div><div class="sb" style="left:4px;top:391px;width:144px;height:18px"><span>Выделено объектов: 1</span></div><div class="sb" style="left:150px;top:391px;width:366px;height:18px"><span></span></div><svg style="left:503px;top:395px" width="12" height="12" shape-rendering="crispEdges"><path d="M11 0 L0 11 M11 4 L4 11 M11 8 L8 11" stroke="#fff"/><path d="M11 1 L1 11 M11 2 L2 11 M11 5 L5 11 M11 6 L6 11 M11 9 L9 11 M11 10 L10 11" stroke="#808080"/></svg><div class="tb"><svg style="left:2px;top:1px" width="16" height="16" shape-rendering="crispEdges"><use href="#ofolder16" width="16" height="16"/></svg><div class="tt">ЭПк-222</div><div class="bt" style="left:460px"><div class="a" style="left:4px;top:9px;width:6px;height:2px;background:#000"></div></div><div class="bt" style="left:476px"><div class="a" style="left:3px;top:2px;width:9px;height:9px;border:1px solid #000;border-top-width:2px"></div></div><div class="bt" style="left:494px"><svg style="left:4px;top:3px" width="8" height="7" shape-rendering="crispEdges"><path d="M0 0h2v1h-2zM6 0h2v1h-2zM1 1h2v1h-2zM5 1h2v1h-2zM2 2h4v1h-4zM3 3h2v1h-2zM2 4h4v1h-4zM1 5h2v1h-2zM5 5h2v1h-2zM0 6h2v1h-2zM6 6h2v1h-2z" fill="#000"/></svg></div></div></div><div class="win" style="left:423px;top:248px;width:180px;height:277px"><div class="mb" style="left:10px;top:25px"><span style="display:inline-block;position:relative;width:11px;height:13px;vertical-align:top"><svg style="left:1px;top:0" width="11" height="13" shape-rendering="crispEdges"><path fill="#000" d="M4 2h1v9h-1zM1 3h7v1h-7zM1 7h7v1h-7zM0 4h1v3h-1zM8 4h1v3h-1zM-1 12h11v1h-11z"/></svg></span>айл</div><div class="mb" style="left:51px;top:25px"><span class="u">П</span>равка</div><div class="mb" style="left:101px;top:25px"><span class="u">В</span>ид</div><div class="mb" style="left:132px;top:25px"><span class="u">?</span></div><div class="cl" style="left:4px;top:42px;width:172px;height:211px"><div class="clin"><svg style="left:24px;top:5px" width="32" height="32" shape-rendering="crispEdges"><use href="#folder32" width="32" height="32"/></svg><div class="a" style="left:17px;top:39px;width:46px;height:14px;outline:1px dotted #000;outline-offset:-1px"></div><div class="lbl" style="left:0.0px;width:80px;top:39px">Рисунки</div><svg style="left:104px;top:2px" width="32" height="32" shape-rendering="crispEdges"><use href="#excel32" width="32" height="32"/></svg><div class="lbl" style="left:80.0px;width:80px;top:39px">Кесте 2,3</div><svg style="left:24px;top:79px" width="32" height="32" shape-rendering="crispEdges"><use href="#word32" width="32" height="32"/></svg><div class="lbl" style="left:0.0px;width:80px;top:116px">Менеджмент</div><div class="lbl" style="left:0.0px;width:80px;top:129px">негіздері</div><svg style="left:104px;top:79px" width="32" height="32" shape-rendering="crispEdges"><use href="#word32" width="32" height="32"/></svg><div class="lbl" style="left:80.0px;width:80px;top:116px">Практика1</div><svg style="left:24px;top:156px" width="32" height="32" shape-rendering="crispEdges"><use href="#paint32" width="32" height="32"/></svg><div class="lbl" style="left:0.0px;width:80px;top:193px">это тебе</div><svg style="left:152px;top:0px" width="16" height="207"><rect width="16" height="207" fill="url(#dithw)"/></svg><div class="btn" style="left:152px;top:0px;width:16px;height:16px"><svg style="left:4px;top:5px" width="7" height="4" shape-rendering="crispEdges"><path d="M3 0h1v1h-1zM2 1h3v1h-3zM1 2h5v1h-5zM0 3h7v1h-7z" fill="#000"/></svg></div><div class="btn" style="left:152px;top:191px;width:16px;height:16px"><svg style="left:4px;top:6px" width="7" height="4" shape-rendering="crispEdges"><path d="M0 0h7v1h-7zM1 1h5v1h-5zM2 2h3v1h-3zM3 3h1v1h-1z" fill="#000"/></svg></div><div class="btn" style="left:152px;top:16px;width:16px;height:175px"></div></div></div><div class="sb" style="left:4px;top:256px;width:144px;height:18px"><span>Объектов: 5</span></div><div class="sb" style="left:150px;top:256px;width:26px;height:18px"><span>3:</span></div><svg style="left:163px;top:260px" width="12" height="12" shape-rendering="crispEdges"><path d="M11 0 L0 11 M11 4 L4 11 M11 8 L8 11" stroke="#fff"/><path d="M11 1 L1 11 M11 2 L2 11 M11 5 L5 11 M11 6 L6 11 M11 9 L9 11 M11 10 L10 11" stroke="#808080"/></svg><div class="tb act"><svg style="left:2px;top:1px" width="16" height="16" shape-rendering="crispEdges"><use href="#ofolder16" width="16" height="16"/></svg><div class="tt">Байзакова</div><div class="bt" style="left:120px"><div class="a" style="left:4px;top:9px;width:6px;height:2px;background:#000"></div></div><div class="bt" style="left:136px"><div class="a" style="left:3px;top:2px;width:9px;height:9px;border:1px solid #000;border-top-width:2px"></div></div><div class="bt" style="left:154px"><svg style="left:4px;top:3px" width="8" height="7" shape-rendering="crispEdges"><path d="M0 0h2v1h-2zM6 0h2v1h-2zM1 1h2v1h-2zM5 1h2v1h-2zM2 2h4v1h-4zM3 3h2v1h-2zM2 4h4v1h-4zM1 5h2v1h-2zM5 5h2v1h-2zM0 6h2v1h-2zM6 6h2v1h-2z" fill="#000"/></svg></div></div></div><div class="a" style="left:0;top:572px;width:800px;height:28px;background:#c0c0c0;box-shadow:inset 0 1px #c0c0c0,inset 0 2px #fff"></div><div class="btn" style="left:2px;top:576px;width:56px;height:22px"><svg style="left:4px;top:3px" width="16" height="16" shape-rendering="crispEdges"><use href="#winlogo" width="16" height="16"/></svg><div class="a tx" style="left:23px;top:4px;font-weight:bold;font-size:12px;line-height:14px">Пуск</div></div><div class="btn" style="left:62px;top:576px;width:95px;height:22px"><svg style="left:4px;top:3px" width="16" height="16" shape-rendering="crispEdges"><use href="#word16" width="16" height="16"/></svg><div class="a tx" style="left:22px;top:4px;white-space:nowrap;line-height:14px;">Реферат - М...</div></div><div class="btn" style="left:160px;top:576px;width:96px;height:22px"><svg style="left:4px;top:3px" width="16" height="16" shape-rendering="crispEdges"><use href="#net16" width="16" height="16"/></svg><div class="a tx" style="left:22px;top:4px;white-space:nowrap;line-height:14px;">Сетевое ок...</div></div><div class="btn" style="left:259px;top:576px;width:95px;height:22px"><svg style="left:4px;top:3px" width="16" height="16" shape-rendering="crispEdges"><use href="#comp16" width="16" height="16"/></svg><div class="a tx" style="left:22px;top:4px;white-space:nowrap;line-height:14px;">Server12</div></div><div class="btn" style="left:357px;top:576px;width:96px;height:22px"><svg style="left:4px;top:3px" width="16" height="16" shape-rendering="crispEdges"><use href="#folder16" width="16" height="16"/></svg><div class="a tx" style="left:22px;top:4px;white-space:nowrap;line-height:14px;">Students -- S...</div></div><div class="btn" style="left:456px;top:576px;width:95px;height:22px"><svg style="left:4px;top:3px" width="16" height="16" shape-rendering="crispEdges"><use href="#ofolder16" width="16" height="16"/></svg><div class="a tx" style="left:22px;top:4px;white-space:nowrap;line-height:14px;">ЭПк-222</div></div><div class="btn dn" style="left:553px;top:576px;width:94px;height:22px"><svg style="left:5px;top:4px" width="16" height="16" shape-rendering="crispEdges"><use href="#ofolder16" width="16" height="16"/></svg><div class="a tx" style="left:23px;top:5px;white-space:nowrap;line-height:14px;font-weight:bold;font-size:12px">Байзакова</div></div><div class="a" style="left:659px;top:576px;width:139px;height:22px;box-shadow:inset 1px 1px #808080,inset -1px -1px #fff"><div class="a tx" style="left:100px;top:4px;line-height:14px">14:03</div></div><svg style="left:662px;top:579px" width="16" height="16" shape-rendering="crispEdges"><path d="M1 5h3v6h-3z" fill="#ffff00"/><path d="M0.5 4.5h3.5v7h-3.5z" fill="none" stroke="#000"/><path d="M4 4 L8 1 V15 L4 12 Z" fill="#fff" stroke="#000"/><path d="M10 6v4M12 5v6" stroke="#808080"/><circle cx="8" cy="8" r="6.5" fill="none" stroke="#ff0000" stroke-width="1.5" shape-rendering="auto"/><path d="M3.5 12.5 L12.5 3.5" stroke="#ff0000" stroke-width="1.5" shape-rendering="auto"/></svg><svg style="left:679px;top:579px" width="16" height="16" shape-rendering="crispEdges"><path d="M3 0h12v11h-12z" fill="#c0c0c0"/><path d="M3.5 11V0.5H15" fill="none" stroke="#fff"/><path d="M14.5 1V11.5" stroke="#000"/><path d="M4 2h9v8h-9z" fill="#0000ff"/><path d="M6 5h2v2h-2z" fill="#ff0000"/><path d="M6 13 L14 3" stroke="#ffff00" stroke-width="2" shape-rendering="auto"/><path d="M13 1h3v3h-3z" fill="#00c000"/><path d="M1 10h4v4h-4z" fill="#000"/><path d="M2 11h2v2h-2z" fill="#fff"/><path d="M0 14h2v2h-2zM4 14h2v2h-2z" fill="#ff0000"/></svg><div class="a" style="left:696px;top:579px;width:16px;height:16px;background:#000080"><div class="a" style="left:0;top:1px;width:16px;text-align:center;color:#fff;font-size:11px;line-height:14px;letter-spacing:-0.5px">EN</div></div><svg style="left:713px;top:578px" width="16" height="17"><circle cx="4.5" cy="4.5" r="4" fill="#c0ffc0" stroke="#808080"/><circle cx="4.5" cy="12.5" r="4" fill="#ffc0ff" stroke="#808080"/><circle cx="11.5" cy="8.5" r="4" fill="#c0ffff" stroke="#808080"/><circle cx="4.5" cy="4.5" r="1.2" fill="#fff"/><circle cx="4.5" cy="12.5" r="1.2" fill="#fff"/><circle cx="11.5" cy="8.5" r="1.2" fill="#fff"/><path d="M1 4h7M1 12h7M8 8h7" stroke="#ff00ff" stroke-width="0.8"/></svg><svg style="left:730px;top:579px" width="16" height="16" shape-rendering="crispEdges"><path d="M0.5 2.5h15v12h-15z" fill="#fff" stroke="#000"/><path d="M0.5 2.5 L8 9 L15.5 2.5" fill="none" stroke="#000" shape-rendering="auto"/><path d="M0 15 C4 11 9 9 16 8" fill="none" stroke="#ff0000" stroke-width="2" shape-rendering="auto"/></svg><div class="a" style="left:0;top:0;width:800px;height:600px;overflow:hidden"><div class="a" style="left:167px;top:-8px;width:99px;height:82px;transform:rotate(-15.5deg);transform-origin:0 0"><svg style="left:0;top:0" width="99" height="82"><rect x="0" y="0" width="99" height="82" rx="15" fill="rgba(225,240,250,0.30)"/><rect x="6" y="6" width="87" height="70" rx="11" fill="rgba(255,255,255,0.07)"/><rect x="1.5" y="1.5" width="96" height="79" rx="14" fill="none" stroke="rgba(140,200,230,0.15)" stroke-width="2"/><path d="M4.9 21.5 C15 23 28 28 38 34 L40 45 C30 41 15 31 4.9 21.5 Z" fill="rgba(30,100,100,0.35)"/><path d="M44 23 C50 25 55 28 57 33 C54 45 50 55 45 61 C42 56 39 51 39 47 C40 38 42 30 44 23 Z" fill="rgba(30,110,40,0.45)"/><path d="M55 31 L79 37.5" stroke="rgba(30,110,40,0.45)" stroke-width="1.6"/><path d="M63 19 A29 29 0 1 1 37 61" fill="none" stroke="rgba(40,170,60,0.45)" stroke-width="2"/><path d="M79 46 A19 19 0 0 1 44 60" fill="none" stroke="rgba(40,170,60,0.40)" stroke-width="1.6"/><path d="M84 42 A24 24 0 0 1 50 70" fill="none" stroke="rgba(40,170,60,0.40)" stroke-width="1.4"/></svg></div><div class="a" style="left:170px;top:164px;width:99px;height:82px;transform:rotate(-15.5deg);transform-origin:0 0"><svg style="left:0;top:0" width="99" height="82"><rect x="0" y="0" width="99" height="82" rx="15" fill="rgba(225,240,250,0.22)"/><rect x="6" y="6" width="87" height="70" rx="11" fill="rgba(255,255,255,0.07)"/><rect x="1.5" y="1.5" width="96" height="79" rx="14" fill="none" stroke="rgba(140,200,230,0.30)" stroke-width="2"/><path d="M4.9 21.5 C15 23 28 28 38 34 L40 45 C30 41 15 31 4.9 21.5 Z" fill="rgba(230,100,100,0.26)"/><path d="M44 23 C50 25 55 28 57 33 C54 45 50 55 45 61 C42 56 39 51 39 47 C40 38 42 30 44 23 Z" fill="rgba(210,200,40,0.32)"/><path d="M55 31 L79 37.5" stroke="rgba(210,200,40,0.32)" stroke-width="1.6"/><path d="M63 19 A29 29 0 1 1 37 61" fill="none" stroke="rgba(200,210,40,0.40)" stroke-width="2"/><path d="M79 46 A19 19 0 0 1 44 60" fill="none" stroke="rgba(200,210,40,0.32)" stroke-width="1.6"/><path d="M84 42 A24 24 0 0 1 50 70" fill="none" stroke="rgba(200,210,40,0.32)" stroke-width="1.4"/></svg></div><div class="a" style="left:169px;top:324px;width:99px;height:82px;transform:rotate(-15.5deg);transform-origin:0 0"><svg style="left:0;top:0" width="99" height="82"><rect x="0" y="0" width="99" height="82" rx="15" fill="rgba(225,240,250,0.22)"/><rect x="6" y="6" width="87" height="70" rx="11" fill="rgba(255,255,255,0.07)"/><rect x="1.5" y="1.5" width="96" height="79" rx="14" fill="none" stroke="rgba(140,200,230,0.30)" stroke-width="2"/><path d="M4.9 21.5 C15 23 28 28 38 34 L40 45 C30 41 15 31 4.9 21.5 Z" fill="rgba(230,100,100,0.26)"/><path d="M44 23 C50 25 55 28 57 33 C54 45 50 55 45 61 C42 56 39 51 39 47 C40 38 42 30 44 23 Z" fill="rgba(210,200,40,0.32)"/><path d="M55 31 L79 37.5" stroke="rgba(210,200,40,0.32)" stroke-width="1.6"/><path d="M63 19 A29 29 0 1 1 37 61" fill="none" stroke="rgba(200,210,40,0.40)" stroke-width="2"/><path d="M79 46 A19 19 0 0 1 44 60" fill="none" stroke="rgba(200,210,40,0.32)" stroke-width="1.6"/><path d="M84 42 A24 24 0 0 1 50 70" fill="none" stroke="rgba(200,210,40,0.32)" stroke-width="1.4"/></svg></div><div class="a" style="left:166px;top:502px;width:99px;height:82px;transform:rotate(-15.5deg);transform-origin:0 0"><svg style="left:0;top:0" width="99" height="82"><rect x="0" y="0" width="99" height="82" rx="15" fill="rgba(225,240,250,0.22)"/><rect x="6" y="6" width="87" height="70" rx="11" fill="rgba(255,255,255,0.07)"/><rect x="1.5" y="1.5" width="96" height="79" rx="14" fill="none" stroke="rgba(140,200,230,0.30)" stroke-width="2"/><path d="M4.9 21.5 C15 23 28 28 38 34 L40 45 C30 41 15 31 4.9 21.5 Z" fill="rgba(230,100,100,0.26)"/><path d="M44 23 C50 25 55 28 57 33 C54 45 50 55 45 61 C42 56 39 51 39 47 C40 38 42 30 44 23 Z" fill="rgba(210,200,40,0.32)"/><path d="M55 31 L79 37.5" stroke="rgba(210,200,40,0.32)" stroke-width="1.6"/><path d="M63 19 A29 29 0 1 1 37 61" fill="none" stroke="rgba(200,210,40,0.40)" stroke-width="2"/><path d="M79 46 A19 19 0 0 1 44 60" fill="none" stroke="rgba(200,210,40,0.32)" stroke-width="1.6"/><path d="M84 42 A24 24 0 0 1 50 70" fill="none" stroke="rgba(200,210,40,0.32)" stroke-width="1.4"/></svg></div><div class="a" style="left:276px;top:1px;width:0;height:0;transform:rotate(-17deg);transform-origin:0 0"><div class="a" style="left:0;top:-37.8px;font-family:'Liberation Serif',serif;font-weight:bold;font-size:42px;line-height:42px;letter-spacing:4px;white-space:pre;color:rgba(205,205,205,0.42)"><span style="color:transparent">Stud.kz - </span>Stud.kz</div></div><div class="a" style="left:283px;top:9px;width:0;height:0;transform:rotate(-17deg);transform-origin:0 0"><div class="a" style="left:0;top:-37.8px;font-family:'Liberation Serif',serif;font-weight:bold;font-size:42px;line-height:42px;letter-spacing:4px;white-space:pre;color:rgba(205,205,205,0.42)"><span style="color:transparent"></span>Stud.kz -</div></div><div class="a" style="left:276px;top:172px;width:0;height:0;transform:rotate(-17deg);transform-origin:0 0"><div class="a" style="left:0;top:-37.8px;font-family:'Liberation Serif',serif;font-weight:bold;font-size:42px;line-height:42px;letter-spacing:4px;white-space:pre;color:rgba(205,205,205,0.42)"><span style="color:transparent">Stud.kz - </span>Stud.kz</div></div><div class="a" style="left:283px;top:180px;width:0;height:0;transform:rotate(-17deg);transform-origin:0 0"><div class="a" style="left:0;top:-37.8px;font-family:'Liberation Serif',serif;font-weight:bold;font-size:42px;line-height:42px;letter-spacing:4px;white-space:pre;color:rgba(205,205,205,0.42)"><span style="color:transparent"></span>Stud.kz -</div></div><div class="a" style="left:276px;top:330px;width:0;height:0;transform:rotate(-17deg);transform-origin:0 0"><div class="a" style="left:0;top:-37.8px;font-family:'Liberation Serif',serif;font-weight:bold;font-size:42px;line-height:42px;letter-spacing:4px;white-space:pre;color:rgba(205,205,205,0.42)"><span style="color:transparent">Stud.kz - </span>Stud.kz</div></div><div class="a" style="left:283px;top:351px;width:0;height:0;transform:rotate(-17deg);transform-origin:0 0"><div class="a" style="left:0;top:-37.8px;font-family:'Liberation Serif',serif;font-weight:bold;font-size:42px;line-height:42px;letter-spacing:4px;white-space:pre;color:rgba(205,205,205,0.42)"><span style="color:transparent"></span>Stud.kz -</div></div><div class="a" style="left:273px;top:509px;width:0;height:0;transform:rotate(-17deg);transform-origin:0 0"><div class="a" style="left:0;top:-37.8px;font-family:'Liberation Serif',serif;font-weight:bold;font-size:42px;line-height:42px;letter-spacing:4px;white-space:pre;color:rgba(205,205,205,0.42)"><span style="color:transparent">Stud.kz - </span>Stud.kz</div></div><div class="a" style="left:283px;top:522px;width:0;height:0;transform:rotate(-17deg);transform-origin:0 0"><div class="a" style="left:0;top:-37.8px;font-family:'Liberation Serif',serif;font-weight:bold;font-size:42px;line-height:42px;letter-spacing:4px;white-space:pre;color:rgba(205,205,205,0.42)"><span style="color:transparent"></span>Stud.kz -</div></div><div class="a" style="left:273px;top:680px;width:0;height:0;transform:rotate(-17deg);transform-origin:0 0"><div class="a" style="left:0;top:-37.8px;font-family:'Liberation Serif',serif;font-weight:bold;font-size:42px;line-height:42px;letter-spacing:4px;white-space:pre;color:rgba(205,205,205,0.42)"><span style="color:transparent">Stud.kz - </span>Stud.kz</div></div><div class="a" style="left:283px;top:693px;width:0;height:0;transform:rotate(-17deg);transform-origin:0 0"><div class="a" style="left:0;top:-37.8px;font-family:'Liberation Serif',serif;font-weight:bold;font-size:42px;line-height:42px;letter-spacing:4px;white-space:pre;color:rgba(205,205,205,0.42)"><span style="color:transparent"></span>Stud.kz -</div></div></div></body></html>
